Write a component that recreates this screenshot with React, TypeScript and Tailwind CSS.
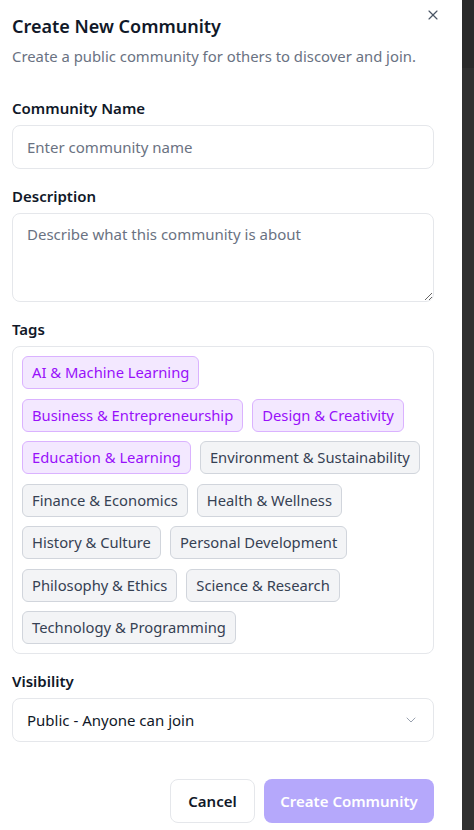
import { X, ChevronDown } from "lucide-react";

const tags = [
  { name: "AI & Machine Learning", on: true },
  { name: "Business & Entrepreneurship", on: true },
  { name: "Design & Creativity", on: true },
  { name: "Education & Learning", on: true },
  { name: "Environment & Sustainability", on: false },
  { name: "Finance & Economics", on: false },
  { name: "Health & Wellness", on: false },
  { name: "History & Culture", on: false },
  { name: "Personal Development", on: false },
  { name: "Philosophy & Ethics", on: false },
  { name: "Science & Research", on: false },
  { name: "Technology & Programming", on: false },
];

function Label({ children }: { children: React.ReactNode }) {
  return <label className="block h-5 text-[15px] leading-4 font-semibold text-gray-900">{children}</label>;
}

export default function App() {
  return (
    <div
      className="flex min-h-[830px] w-full bg-white"
      style={{ fontFamily: '"Segoe UI", "Noto Sans", sans-serif' }}
    >
      <div className="relative w-[462px] shrink-0 pl-3 pr-7 pt-3 pb-2">
        <button className="absolute right-[21px] top-[7px] text-gray-600">
          <X size={16} strokeWidth={1.75} />
        </button>

        <h2 className="text-lg leading-7 font-semibold text-gray-900">Create New Community</h2>
        <p className="mt-1.5 text-[14.85px] leading-5 text-gray-500">
          Create a public community for others to discover and join.
        </p>

        <div className="mt-[34px] flex flex-col gap-[19px]">
          <div>
            <Label>Community Name</Label>
            <input
              placeholder="Enter community name"
              className="mt-[5px] h-11 w-full rounded-lg border border-gray-200 px-3.5 text-[15px] text-gray-900 placeholder:text-gray-500 outline-none"
            />
          </div>

          <div>
            <Label>Description</Label>
            <textarea
              placeholder="Describe what this community is about"
              className="mt-[5px] block h-[89px] w-full rounded-lg border border-gray-200 px-3.5 py-2.5 text-[15px] leading-5 text-gray-900 placeholder:text-gray-500 outline-none"
            />
          </div>

          <div>
            <Label>Tags</Label>
            <div className="mt-[5px] flex flex-wrap gap-x-[9px] gap-y-[9.5px] rounded-lg border border-gray-200 p-[9px]">
              {tags.map((t) => (
                <span
                  key={t.name}
                  className={
                    t.on
                      ? "flex h-[33px] items-center rounded-md border border-purple-300 bg-purple-100 px-[9px] text-[14.75px] text-purple-600"
                      : "flex h-[33px] items-center rounded-md border border-gray-300 bg-gray-100 px-[9px] text-[14.75px] text-gray-700"
                  }
                >
                  {t.name}
                </span>
              ))}
            </div>
          </div>

          <div>
            <Label>Visibility</Label>
            <div className="mt-[5px] flex h-11 w-full items-center justify-between rounded-lg border border-gray-200 px-3.5 text-[15px] text-gray-900">
              <span>Public - Anyone can join</span>
              <ChevronDown size={16} strokeWidth={1.5} className="text-gray-400" />
            </div>
          </div>
        </div>

        <div className="mt-[37px] flex justify-end gap-[9px]">
          <button className="h-11 w-[85px] rounded-lg border border-gray-200 bg-white text-[15px] font-semibold text-gray-900">
            Cancel
          </button>
          <button className="h-11 w-[170px] rounded-lg bg-[#b5a8fb] text-[15px] font-semibold text-white">
            Create Community
          </button>
        </div>
      </div>

      <div className="flex w-3 shrink-0 flex-col">
        <div className="h-[68px] bg-[#2a2a2a]" />
        <div className="flex-1 bg-[#303030]" />
      </div>
    </div>
  );
}
